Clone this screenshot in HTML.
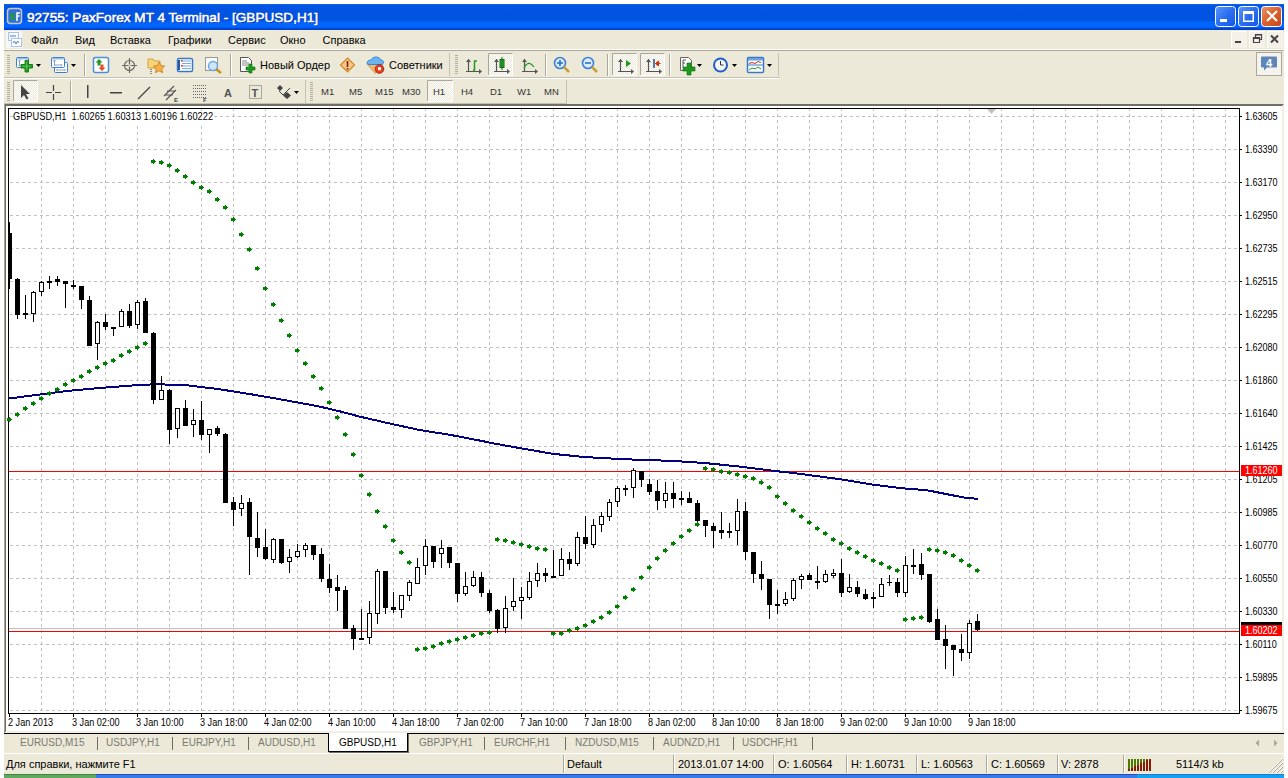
<!DOCTYPE html>
<html><head><meta charset="utf-8">
<style>
*{margin:0;padding:0;box-sizing:border-box}
html,body{width:1288px;height:778px;overflow:hidden;background:#fff;font-family:"Liberation Sans",sans-serif;position:relative}
.abs{position:absolute}
#title{position:absolute;left:4px;top:4px;width:1280px;height:26px;
 background:linear-gradient(to bottom,#1a64ea 0px,#0058e6 1px,#0054e1 4px,#0053df 16px,#0063f8 18px,#0066ff 19px,#0066ff 23px,#0050e0 24px,#0040c4 25px,#0045cc 26px);
 border-radius:0}
#title .tt{position:absolute;left:23px;top:5.5px;font:13.6px "Liberation Sans",sans-serif;color:#fff;white-space:nowrap;-webkit-text-stroke:0.55px #fff;text-shadow:1px 1px 0 #0a2a9c}
#menubar{position:absolute;left:4px;top:30px;width:1280px;height:19px;background:#ece9d8}
.mi{position:absolute;top:34px;font-size:11px;color:#000;white-space:nowrap}
#sep1{position:absolute;left:4px;top:49px;width:1280px;height:1px;background:#fff}
#sep2{position:absolute;left:4px;top:50px;width:1280px;height:1px;background:#aca899}
#tb{position:absolute;left:4px;top:51px;width:1280px;height:53px;background:#ece9d8}
#tbsh{position:absolute;left:4px;top:104px;width:1280px;height:2px;background:linear-gradient(#a5a291 0 1px,#716f64 1px 2px)}
#chartwin{position:absolute;left:4px;top:104px;width:1280px;height:629px;background:#fff;border-left:2px solid #716f64;border-top:2px solid #716f64;border-right:2px solid #f1efe2;border-bottom:2px solid #f1efe2;box-shadow:inset 0 0 0 0 #000}
#cwl{position:absolute;left:4px;top:104px;width:1px;height:627px;background:#a5a291}
.pl{position:absolute;left:1245px;font-size:10px;transform:scaleX(0.9);transform-origin:0 0;color:#000;white-space:nowrap;line-height:12px}
.tl{position:absolute;top:717px;font-size:10px;transform:scaleX(0.91);transform-origin:0 0;color:#000;white-space:nowrap;line-height:12px}
#clabel{position:absolute;left:13px;top:111px;background:#fff;padding-right:1px;font-size:10px;transform:scaleX(0.925);transform-origin:0 0;color:#000;white-space:nowrap;line-height:12px}
.sx{display:inline-block;transform:scaleX(0.9);transform-origin:0 0}
.plbox{position:absolute;left:1241px;width:41px;height:11px;background:#ff0000;color:#fff;font-size:10px;line-height:11px;padding-left:4px;white-space:nowrap}
#tabline{position:absolute;left:4px;top:733px;width:1280px;height:1px;background:#000}
#tabbar{position:absolute;left:4px;top:734px;width:1280px;height:19px;background:#ece9d8}
.tab{position:absolute;top:736px;font-size:10px;color:#7b7a72;white-space:nowrap;line-height:14px}
.tab.act{color:#000}
.acttab{position:absolute;left:328px;top:733px;width:80px;height:19px;background:#fff;border:1px solid #000;border-top:none;border-left-width:1px;border-bottom-width:1px;border-right-width:1px;box-shadow:1px 1px 0 #716f64}
.tsep{position:absolute;top:737px;width:1px;height:13px;background:#716f64}
#statusbar{position:absolute;left:4px;top:753px;width:1280px;height:21px;background:#ece9d8;border-top:1px solid #fff}
.st{position:absolute;top:758px;font-size:11px;color:#000;white-space:nowrap;line-height:13px}
.ssep{position:absolute;top:755px;width:2px;height:18px;border-left:1px solid #aca899;border-right:1px solid #fff}
#taskbar{position:absolute;left:4px;top:774px;width:1280px;height:4px;background:linear-gradient(#1c4fb8 0 1px,#3a7ae6 1px)}
#tray{position:absolute;left:1137px;top:774px;width:147px;height:4px;background:linear-gradient(#1680d8 0 1px,#16a0f0 1px)}
#startbtn{position:absolute;left:4px;top:774px;width:92px;height:4px;background:linear-gradient(#3a8a3a 0 1px,#62a862 1px)}
.tf{position:absolute;top:86px;font-size:9.5px;color:#333;white-space:nowrap;line-height:12px}
.grip{position:absolute;width:4px;background:repeating-linear-gradient(#c1beb3 0 1px,transparent 1px 2px)}
.vsep{position:absolute;width:1px;background:#aca899}
.pressed{position:absolute;border:1px solid #c1beb3;background-color:#f4f3ee;background-image:repeating-conic-gradient(#fff 0 25%,#ece9d8 0 50%);background-size:2px 2px}
.tbend{position:absolute;width:1px;background:#c1beb3}
</style></head><body>
<div id="title"><div class="tt">92755: PaxForex MT 4 Terminal - [GBPUSD,H1]</div></div>
<div id="menubar"></div>
<div class="mi" style="left:31px">Файл</div><div class="mi" style="left:75px">Вид</div><div class="mi" style="left:110px">Вставка</div><div class="mi" style="left:168px">Графики</div><div class="mi" style="left:228px">Сервис</div><div class="mi" style="left:280px">Окно</div><div class="mi" style="left:322.5px">Справка</div>
<div id="sep1"></div><div id="sep2"></div>
<div id="tb"></div>
<svg width="1288" height="105" viewBox="0 0 1288 105" style="position:absolute;left:0;top:0"><defs><pattern id="dith" width="2" height="2" patternUnits="userSpaceOnUse"><rect width="2" height="2" fill="#ece9d8"/><rect width="1" height="1" fill="#fff"/><rect x="1" y="1" width="1" height="1" fill="#fff"/></pattern></defs><rect x="4" y="77" width="776" height="1" fill="#c5c2b2"/><rect x="4" y="78" width="776" height="1" fill="#fff"/><rect x="4" y="103" width="563" height="1" fill="#c5c2b2"/><rect x="449" y="53" width="1" height="23" fill="#c5c2b2"/><rect x="778" y="53" width="1" height="23" fill="#c5c2b2"/><rect x="305" y="80" width="1" height="23" fill="#c5c2b2"/><rect x="566" y="80" width="1" height="23" fill="#c5c2b2"/><rect x="7.5" y="8.5" width="14" height="15" rx="3" fill="#2f6fe8" stroke="#c8c8c0" stroke-width="1.5"/><path d="M10 13l5 7M15 13l-5 7" stroke="#2a9a20" stroke-width="2"/><path d="M17 21V13h3M17 16h2.5" stroke="#fff" stroke-width="1.6" fill="none"/><defs><linearGradient id="tbg" x1="0" y1="0" x2="1" y2="1"><stop offset="0" stop-color="#5b97f8"/><stop offset="0.5" stop-color="#2d6ef0"/><stop offset="1" stop-color="#1456e6"/></linearGradient><linearGradient id="tbc" x1="0" y1="0" x2="1" y2="1"><stop offset="0" stop-color="#e8936a"/><stop offset="0.5" stop-color="#d9602d"/><stop offset="1" stop-color="#c8461a"/></linearGradient></defs><rect x="1215.5" y="6.5" width="20" height="20" rx="3" fill="url(#tbg)" stroke="#fff"/><rect x="1220" y="19" width="7" height="3" fill="#fff"/><rect x="1238.5" y="6.5" width="20" height="20" rx="3" fill="url(#tbg)" stroke="#fff"/><path d="M1243 11h11v11h-11zM1244.5 14v6.5h8v-6.5z" fill="#fff" fill-rule="evenodd"/><rect x="1261.5" y="6.5" width="20" height="20" rx="3" fill="url(#tbc)" stroke="#fff"/><path d="M1267 11l10 10M1277 11l-10 10" stroke="#fff" stroke-width="2"/><rect x="6" y="31" width="16" height="17" fill="#f6f7fb"/><rect x="8.5" y="32.5" width="10" height="8" fill="none" stroke="#5b8fd8" stroke-dasharray="1 1"/><rect x="11.5" y="38.5" width="10" height="8" fill="#fff" stroke="#5b8fd8" stroke-dasharray="1 1"/><path d="M13 43l1.5-2l1.5 3l1.5-3l1.5 2" stroke="#4a7fd0" fill="none"/><path d="M10 36h6" stroke="#4a7fd0"/><rect x="1231" y="31" width="16" height="17" fill="#f3f1e8"/><path d="M1231.5 48V31.5H1247" stroke="#fff" fill="none"/><rect x="1249" y="31" width="16" height="17" fill="#f3f1e8"/><path d="M1249.5 48V31.5H1265" stroke="#fff" fill="none"/><rect x="1267" y="31" width="16" height="17" fill="#f3f1e8"/><path d="M1267.5 48V31.5H1283" stroke="#fff" fill="none"/><rect x="1235" y="41" width="6" height="2" fill="#444"/><path d="M1253.5 37.5h6v5h-6zM1255.5 37v-2.5h6v5h-2" stroke="#444" stroke-width="1.2" fill="none"/><rect x="1253" y="37" width="7" height="2" fill="#444"/><rect x="1255" y="34" width="7" height="1.5" fill="#444"/><path d="M1271 35.5l7 7M1278 35.5l-7 7" stroke="#444" stroke-width="2"/><rect x="7" y="55" width="3" height="1" fill="#b1ae9e"/><rect x="7" y="57" width="3" height="1" fill="#b1ae9e"/><rect x="7" y="59" width="3" height="1" fill="#b1ae9e"/><rect x="7" y="61" width="3" height="1" fill="#b1ae9e"/><rect x="7" y="63" width="3" height="1" fill="#b1ae9e"/><rect x="7" y="65" width="3" height="1" fill="#b1ae9e"/><rect x="7" y="67" width="3" height="1" fill="#b1ae9e"/><rect x="7" y="69" width="3" height="1" fill="#b1ae9e"/><rect x="7" y="71" width="3" height="1" fill="#b1ae9e"/><rect x="7" y="73" width="3" height="1" fill="#b1ae9e"/><rect x="16.5" y="57.5" width="12" height="10" rx="1" fill="#fff" stroke="#3c7fd0"/><rect x="17" y="58" width="11" height="1.5" fill="#9cc0ea"/><path d="M19.5 60v6M18.2 61.3l1.3-1.3l1.3 1.3M18.2 64.7l1.3 1.3l1.3-1.3" stroke="#8aa4c4" fill="none"/><path d="M25 60.5h3.5v4h4v3.5h-4v4h-3.5v-4h-4v-3.5h4z" fill="#23a023" stroke="#0a7a0a" stroke-width="0.9"/><path d="M26.7 61.5v8M22.5 66.2h8" stroke="#8fd08f" stroke-width="0.8" opacity="0.7"/><path d="M36 64h5l-2.5 3z" fill="#000"/><rect x="54.5" y="62.5" width="13" height="10" rx="1" fill="#fff" stroke="#3c7fd0"/><path d="M57 70h8M57.5 69l-1 1l1 1M64.5 69l1 1l-1 1" stroke="#8aa4c4" fill="none"/><rect x="51.5" y="57.5" width="13" height="10" rx="1" fill="#fff" stroke="#3c7fd0"/><rect x="52" y="58" width="12" height="1.5" fill="#9cc0ea"/><path d="M54.5 60v6M53.2 61.3l1.3-1.3l1.3 1.3M54 65h8M61 64l1 1l-1 1" stroke="#8aa4c4" fill="none"/><path d="M71 64h5l-2.5 3z" fill="#000"/><rect x="84" y="54" width="1" height="22" fill="#aca899"/><rect x="85" y="54" width="1" height="22" fill="#fff"/><rect x="93.5" y="57.5" width="15" height="15" rx="2" fill="#fff" stroke="#4a90d9" stroke-width="1.5"/><path d="M99 59l-3.5 3.5h2v3h3v-3h2z" fill="#1e9a1e"/><path d="M102 71l3.5-3.5h-2v-3h-3v3h-2z" fill="#e05030"/><circle cx="129.5" cy="65.5" r="5" fill="none" stroke="#6a6a6a" stroke-width="1.2"/><path d="M129.5 58v15M122 65.5h15" stroke="#6a6a6a" stroke-width="1.2"/><rect x="128.5" y="64.5" width="2" height="2" fill="#ece9d8"/><path d="M148 59h5l1 2h6v7h-12z" fill="#f8d77a" stroke="#d4a040"/><path d="M159 62l1.8 3.6l3.9.5l-2.9 2.7l.8 3.9l-3.6-1.9l-3.5 1.9l.7-3.9l-2.8-2.7l3.9-.5z" fill="#f5b041" stroke="#c87a20" stroke-width="0.8"/><path d="M151 69v5" stroke="#333" stroke-dasharray="1 1"/><rect x="177.5" y="58.5" width="15" height="13" rx="1.5" fill="#fff" stroke="#3a78c8" stroke-width="1.5"/><path d="M179 60v10" stroke="#2a5aa0" stroke-width="2"/><path d="M182 61h9M182 63.5h9M182 66h9M182 68.5h9" stroke="#7aa8e0"/><rect x="181" y="60" width="1.5" height="1.5" fill="#e02020"/><rect x="181" y="65" width="1.5" height="1.5" fill="#e02020"/><rect x="205.5" y="57.5" width="12" height="13" fill="#fafafa" stroke="#999"/><circle cx="213" cy="66" r="4.5" fill="#cfe6fb" stroke="#6aa8e8" stroke-width="1.5"/><path d="M216 69l5 4" stroke="#c89020" stroke-width="2.5"/><rect x="230" y="54" width="1" height="22" fill="#aca899"/><rect x="231" y="54" width="1" height="22" fill="#fff"/><path d="M240.5 57.5h8l3 3v11h-11z" fill="#fff" stroke="#555"/><path d="M242 61h5M242 63h7M242 65h7" stroke="#888"/><path d="M249 64h3v3h3v3h-3v3h-3v-3h-3v-3h3z" fill="#1e9a1e" stroke="#0b6d0b" stroke-width="0.6"/><path d="M347.5 58l7 7l-7 7l-7-7z" fill="#f8c88a" stroke="#d08a20" stroke-width="1.2"/><path d="M347.5 61v6" stroke="#8a1a10" stroke-width="1.6"/><rect x="346.7" y="68" width="1.6" height="1.6" fill="#8a1a10"/><path d="M367.5 64.5l8 9l5-4l2-5.5z" fill="#f5b870" stroke="#c88a40" stroke-width="0.8"/><path d="M367 63c0-2 2-3 4-3c1-2 3-3 5-3s4 1 5 3c1.5 0 2.5 1 2.5 2.5c0 1.5-1.5 2-3 2h-10.5c-2 0-3-.5-3-1.5z" fill="#6cb4f0" stroke="#2a7ad8" stroke-width="0.9"/><circle cx="379.5" cy="69" r="4.3" fill="#e8401a" stroke="#a02010" stroke-width="0.9"/><rect x="378" y="67.2" width="3" height="3" fill="#fff"/><rect x="455" y="55" width="3" height="1" fill="#b1ae9e"/><rect x="455" y="57" width="3" height="1" fill="#b1ae9e"/><rect x="455" y="59" width="3" height="1" fill="#b1ae9e"/><rect x="455" y="61" width="3" height="1" fill="#b1ae9e"/><rect x="455" y="63" width="3" height="1" fill="#b1ae9e"/><rect x="455" y="65" width="3" height="1" fill="#b1ae9e"/><rect x="455" y="67" width="3" height="1" fill="#b1ae9e"/><rect x="455" y="69" width="3" height="1" fill="#b1ae9e"/><rect x="455" y="71" width="3" height="1" fill="#b1ae9e"/><rect x="455" y="73" width="3" height="1" fill="#b1ae9e"/><path d="M468.5 59V72M466 71.5H480" stroke="#555" stroke-width="1.2" fill="none"/><path d="M466 62l2.5-3l2.5 3z M479 69l3 2.5l-3 2.5z" fill="#555"/><path d="M473 70h1.5V61H477" stroke="#1e9a1e" stroke-width="1.5" fill="none"/><rect x="488" y="53" width="25" height="23" fill="url(#dith)"/><path d="M488.5 76V53.5H513" stroke="#aca899" fill="none"/><path d="M512.5 53.5V75.5H488" stroke="#fff" fill="none"/><path d="M496.5 59V72M494 71.5H508" stroke="#555" stroke-width="1.2" fill="none"/><path d="M494 62l2.5-3l2.5 3z M507 69l3 2.5l-3 2.5z" fill="#555"/><rect x="500" y="59.5" width="4" height="8" fill="#3cae3c" stroke="#0b6d0b"/><path d="M502 57v13" stroke="#0b6d0b"/><path d="M524.5 59V72M522 71.5H536" stroke="#555" stroke-width="1.2" fill="none"/><path d="M522 62l2.5-3l2.5 3z M535 69l3 2.5l-3 2.5z" fill="#555"/><path d="M524 68c3-6 6-6 10-1" stroke="#1e9a1e" stroke-width="1.2" fill="none"/><rect x="545" y="54" width="1" height="22" fill="#aca899"/><rect x="546" y="54" width="1" height="22" fill="#fff"/><circle cx="560" cy="63" r="5.5" fill="#dbeafc" stroke="#3a80d8" stroke-width="1.6"/><path d="M557 63h6M560 60v6" stroke="#2a70c8" stroke-width="1.6"/><path d="M564 67l5 5" stroke="#c8a030" stroke-width="2.5"/><circle cx="588" cy="63" r="5.5" fill="#dbeafc" stroke="#3a80d8" stroke-width="1.6"/><path d="M585 63h6" stroke="#2a70c8" stroke-width="1.6"/><path d="M592 67l5 5" stroke="#c8a030" stroke-width="2.5"/><rect x="607" y="54" width="1" height="22" fill="#aca899"/><rect x="608" y="54" width="1" height="22" fill="#fff"/><rect x="612" y="53" width="25" height="23" fill="url(#dith)"/><path d="M612.5 76V53.5H637" stroke="#aca899" fill="none"/><path d="M636.5 53.5V75.5H612" stroke="#fff" fill="none"/><path d="M620.5 59V72M618 71.5H632" stroke="#555" stroke-width="1.2" fill="none"/><path d="M618 62l2.5-3l2.5 3z M631 69l3 2.5l-3 2.5z" fill="#555"/><path d="M626 60v7l5-3.5z" fill="#1e9a1e"/><rect x="640" y="53" width="25" height="23" fill="url(#dith)"/><path d="M640.5 76V53.5H665" stroke="#aca899" fill="none"/><path d="M664.5 53.5V75.5H640" stroke="#fff" fill="none"/><path d="M648.5 59V72M646 71.5H660" stroke="#555" stroke-width="1.2" fill="none"/><path d="M646 62l2.5-3l2.5 3z M659 69l3 2.5l-3 2.5z" fill="#555"/><path d="M654 59v9" stroke="#2050a0" stroke-width="1.5"/><path d="M655.5 63.5h5M655.5 63.5l3-2.5v5z" stroke="#d03010" fill="#d03010"/><rect x="669" y="54" width="1" height="22" fill="#aca899"/><rect x="670" y="54" width="1" height="22" fill="#fff"/><path d="M680.5 57.5h8l3 3v10h-11z" fill="#fff" stroke="#666"/><path d="M683 60v7M683 60h3M683 63h2" stroke="#555"/><path d="M687 63h4v4h4v4h-4v4h-4v-4h-4v-4h4z" fill="#1e9a1e" stroke="#0b6d0b" stroke-width="0.6"/><path d="M697 64h5l-2.5 3z" fill="#000"/><circle cx="720.5" cy="65" r="7.5" fill="#2060c8"/><circle cx="720.5" cy="65" r="5.5" fill="#f4f6fa"/><path d="M720.5 61v4h3" stroke="#333" fill="none"/><path d="M732 64h5l-2.5 3z" fill="#000"/><rect x="747.5" y="57.5" width="16" height="15" rx="1" fill="#fff" stroke="#3a78c8" stroke-width="1.5"/><rect x="748" y="58" width="15" height="2.5" fill="#6aa0e0"/><path d="M748 65h15" stroke="#3a78c8"/><path d="M749 63.5l3-1l3 1l3-2l3 1" stroke="#c03020" fill="none"/><path d="M749 70l3-2l3 1l3-2l3 2" stroke="#1e9a1e" fill="none"/><path d="M767 64h5l-2.5 3z" fill="#000"/><rect x="1256.5" y="52.5" width="25" height="23" fill="#f4f3ee" stroke="#aca899"/><path d="M1262 56.5h14a1 1 0 0 1 1 1v9a1 1 0 0 1-1 1h-9l-3 3v-3h-2a1 1 0 0 1-1-1v-9a1 1 0 0 1 1-1z" fill="#5f86b8"/><text x="1269" y="66.5" font-family="Liberation Sans" font-size="11" font-weight="bold" fill="#fff" text-anchor="middle">4</text><rect x="7" y="82" width="3" height="1" fill="#b1ae9e"/><rect x="7" y="84" width="3" height="1" fill="#b1ae9e"/><rect x="7" y="86" width="3" height="1" fill="#b1ae9e"/><rect x="7" y="88" width="3" height="1" fill="#b1ae9e"/><rect x="7" y="90" width="3" height="1" fill="#b1ae9e"/><rect x="7" y="92" width="3" height="1" fill="#b1ae9e"/><rect x="7" y="94" width="3" height="1" fill="#b1ae9e"/><rect x="7" y="96" width="3" height="1" fill="#b1ae9e"/><rect x="7" y="98" width="3" height="1" fill="#b1ae9e"/><rect x="7" y="100" width="3" height="1" fill="#b1ae9e"/><rect x="13" y="80" width="25" height="22" fill="url(#dith)"/><path d="M13.5 102V80.5H38" stroke="#aca899" fill="none"/><path d="M37.5 80.5V101.5H13" stroke="#fff" fill="none"/><path d="M21 85v13l3-3l2.5 4.5l2-1l-2.5-4.5h4z" fill="#444"/><path d="M53.5 85v15M46 92.5h15" stroke="#444" stroke-width="1.2"/><rect x="52" y="91" width="3" height="3" fill="#ece9d8"/><rect x="70" y="81" width="1" height="21" fill="#aca899"/><rect x="71" y="81" width="1" height="21" fill="#fff"/><rect x="87" y="85" width="1.5" height="13" fill="#444"/><rect x="110" y="92" width="12" height="1.5" fill="#444"/><path d="M138 99L150 87" stroke="#444" stroke-width="1.2"/><path d="M164 96l10-10M166 100l10-10M167 91h8M165 95h8" stroke="#555" stroke-width="1.2"/><text x="174" y="102" font-family="Liberation Sans" font-size="6" font-weight="bold" fill="#444">E</text><path d="M193 85.5h14M193 88.5h14M193 91.5h14M193 94.5h14M193 97.5h14" stroke="#666" stroke-dasharray="1 1"/><text x="203" y="102" font-family="Liberation Sans" font-size="6" font-weight="bold" fill="#444">F</text><text x="224" y="97" font-family="Liberation Sans" font-size="11" font-weight="bold" fill="#555">A</text><rect x="249.5" y="85.5" width="12" height="13" fill="none" stroke="#666" stroke-dasharray="1 1"/><text x="251.5" y="97" font-family="Liberation Sans" font-size="11" font-weight="bold" fill="#555">T</text><path d="M280 85l3 3l-3 3l-3-3z M287 92l4 3.5l-4 3.5l-4-3.5z" fill="#444"/><path d="M279 91l4 4l7-7" stroke="#444" fill="none"/><path d="M294 91h5l-2.5 3z" fill="#000"/><rect x="310" y="82" width="3" height="1" fill="#b1ae9e"/><rect x="310" y="84" width="3" height="1" fill="#b1ae9e"/><rect x="310" y="86" width="3" height="1" fill="#b1ae9e"/><rect x="310" y="88" width="3" height="1" fill="#b1ae9e"/><rect x="310" y="90" width="3" height="1" fill="#b1ae9e"/><rect x="310" y="92" width="3" height="1" fill="#b1ae9e"/><rect x="310" y="94" width="3" height="1" fill="#b1ae9e"/><rect x="310" y="96" width="3" height="1" fill="#b1ae9e"/><rect x="310" y="98" width="3" height="1" fill="#b1ae9e"/><rect x="310" y="100" width="3" height="1" fill="#b1ae9e"/><rect x="427" y="80" width="26" height="22" fill="url(#dith)"/><path d="M427.5 102V80.5H453" stroke="#aca899" fill="none"/><path d="M452.5 80.5V101.5H427" stroke="#fff" fill="none"/></svg>
<div class="tf" style="left:321px">M1</div><div class="tf" style="left:349px">M5</div><div class="tf" style="left:375px">M15</div><div class="tf" style="left:402px">M30</div><div class="tf" style="left:433px">H1</div><div class="tf" style="left:461px">H4</div><div class="tf" style="left:490px">D1</div><div class="tf" style="left:517px">W1</div><div class="tf" style="left:544px">MN</div>
<div class="mi" style="left:260px;top:59px">Новый Ордер</div>
<div class="mi" style="left:389px;top:59px">Советники</div>
<div id="tbsh"></div>
<div id="chartwin"></div><div id="cwl"></div>
<svg width="1288" height="778" viewBox="0 0 1288 778" style="position:absolute;left:0;top:0" shape-rendering="crispEdges">
<path d="M41.5 108V713M73.5 108V713M105.5 108V713M137.5 108V713M169.5 108V713M201.5 108V713M233.5 108V713M265.5 108V713M297.5 108V713M329.5 108V713M361.5 108V713M393.5 108V713M425.5 108V713M457.5 108V713M489.5 108V713M521.5 108V713M553.5 108V713M585.5 108V713M617.5 108V713M649.5 108V713M681.5 108V713M713.5 108V713M745.5 108V713M777.5 108V713M809.5 108V713M841.5 108V713M873.5 108V713M905.5 108V713M937.5 108V713M969.5 108V713M1001.5 108V713M1033.5 108V713M1065.5 108V713M1097.5 108V713M1129.5 108V713M1161.5 108V713M1193.5 108V713M1225.5 108V713" stroke="#c0c0c0" stroke-width="1" stroke-dasharray="3 3" fill="none"/>
<path d="M10 116.5H1239M10 149.5H1239M10 182.5H1239M10 215.5H1239M10 248.5H1239M10 281.5H1239M10 314.5H1239M10 347.5H1239M10 380.5H1239M10 413.5H1239M10 446.5H1239M10 479.5H1239M10 512.5H1239M10 545.5H1239M10 578.5H1239M10 611.5H1239M10 644.5H1239M10 677.5H1239M10 710.5H1239" stroke="#c0c0c0" stroke-width="1" stroke-dasharray="3 3" fill="none"/>
<rect x="8.5" y="108.5" width="1231" height="605" fill="none" stroke="#000" stroke-width="1"/>
<path d="M1240 116.5H1242M1240 149.5H1242M1240 182.5H1242M1240 215.5H1242M1240 248.5H1242M1240 281.5H1242M1240 314.5H1242M1240 347.5H1242M1240 380.5H1242M1240 413.5H1242M1240 446.5H1242M1240 479.5H1242M1240 512.5H1242M1240 545.5H1242M1240 578.5H1242M1240 611.5H1242M1240 644.5H1242M1240 677.5H1242M1240 710.5H1242M9.5 714V717M73.5 714V717M137.5 714V717M201.5 714V717M265.5 714V717M329.5 714V717M393.5 714V717M457.5 714V717M521.5 714V717M585.5 714V717M649.5 714V717M713.5 714V717M777.5 714V717M841.5 714V717M905.5 714V717M969.5 714V717" stroke="#000" stroke-width="1" fill="none"/>
<path d="M987 109H996L991.5 114Z" fill="#c0c0c0" shape-rendering="auto"/>
<path d="M9 471.5H1239" stroke="#ff0000" stroke-width="1"/>
<path d="M9 628.5H1239" stroke="#c0c0c0" stroke-width="1"/>
<path d="M9 631.5H1239" stroke="#ff0000" stroke-width="1"/>
<polyline points="9.0,398.5 35.8,395.0 66.7,391.0 97.5,388.2 137.6,385.1 157.0,384.2 187.8,385.4 218.7,389.1 249.5,394.0 280.3,399.3 317.0,406.0 340.0,411.4 360.0,416.7 389.7,423.5 419.5,430.0 449.3,434.7 481.6,440.9 491.8,443.1 522.7,448.6 553.5,453.9 584.3,457.0 621.0,459.1 674.7,461.0 705.5,463.1 736.3,466.2 773.0,470.8 795.8,473.3 842.1,479.5 872.9,484.7 903.7,488.4 925.0,490.0 933.0,491.4 949.0,494.6 965.2,497.8 978.0,498.8" fill="none" stroke="#000080" stroke-width="2"/>
<defs><clipPath id="cc"><rect x="9" y="109" width="1230" height="604"/></clipPath></defs><g clip-path="url(#cc)">
<path d="M9.5 222V289M17.5 278V319M25.5 295V319M33.5 291V322M41.5 281V296M49.5 276V289M57.5 276V286M65.5 281V308M73.5 280V289M81.5 286V309M89.5 296V346M97.5 321V360M105.5 314V330M113.5 327V336M121.5 309V327M129.5 304V328M137.5 300V329M145.5 298V333M153.5 332V404M161.5 376V400M169.5 389V444M177.5 408V438M185.5 400V426M193.5 409V437M201.5 401V440M209.5 429V453M217.5 426V436M225.5 433V503M233.5 497V526M241.5 495V516M249.5 498V575M257.5 512V557M265.5 529V560M273.5 538V563M281.5 539V564M289.5 549V573M297.5 544V558M305.5 543V557M313.5 545V560M321.5 548V582M329.5 564V593M337.5 575V611M345.5 586V629M353.5 625V650M361.5 609V639M369.5 601V644M377.5 569V624M385.5 571V614M393.5 592V613M401.5 595V618M409.5 580V601M417.5 558V584M425.5 539V575M433.5 546V568M441.5 540V568M449.5 547V568M457.5 563V602M465.5 572V596M473.5 571V587M481.5 572V597M489.5 590V613M497.5 609V633M505.5 596V633M513.5 578V611M521.5 587V619M529.5 572V600M537.5 563V587M545.5 568V582M553.5 550V576M561.5 548V576M569.5 552V570M577.5 532V566M585.5 516V549M593.5 519V548M601.5 512V532M609.5 499V521M617.5 486V507M625.5 485V496M633.5 468V498M641.5 471V487M649.5 479V495M657.5 480V510M665.5 482V508M673.5 482V508M681.5 491V505M689.5 492V503M697.5 500V523M705.5 520V537M713.5 523V548M721.5 512V539M729.5 523V538M737.5 499V545M745.5 502V560M753.5 552V583M761.5 561V590M769.5 579V619M777.5 590V614M785.5 592V606M793.5 578V601M801.5 574V589M809.5 573V580M817.5 566V589M825.5 570V583M833.5 569V578M841.5 559V597M849.5 574V593M857.5 581V597M865.5 589V600M873.5 592V608M881.5 578V597M889.5 575V586M897.5 578V597M905.5 556V597M913.5 549V574M921.5 553V580M929.5 574V623M937.5 609V640M945.5 625V669M953.5 645V676M961.5 634V661M969.5 620V659M977.5 614V631" stroke="#000" stroke-width="1" fill="none"/>
<rect x="7" y="233" width="5" height="46" fill="#000"/>
<rect x="15" y="279" width="5" height="36" fill="#000"/>
<rect x="23" y="313" width="5" height="2" fill="#000"/>
<rect x="31.5" y="292.5" width="4" height="21" fill="#fff" stroke="#000" stroke-width="1"/>
<rect x="39.5" y="282.5" width="4" height="9" fill="#fff" stroke="#000" stroke-width="1"/>
<rect x="47" y="281" width="5" height="2" fill="#000"/>
<rect x="55" y="279" width="5" height="3" fill="#000"/>
<rect x="63" y="281" width="5" height="3" fill="#000"/>
<rect x="71" y="285" width="5" height="2" fill="#000"/>
<rect x="79" y="286" width="5" height="14" fill="#000"/>
<rect x="87" y="300" width="5" height="46" fill="#000"/>
<rect x="95.5" y="322.5" width="4" height="21" fill="#fff" stroke="#000" stroke-width="1"/>
<rect x="103" y="322" width="5" height="5" fill="#000"/>
<rect x="111" y="327" width="5" height="2" fill="#000"/>
<rect x="119.5" y="311.5" width="4" height="15" fill="#fff" stroke="#000" stroke-width="1"/>
<rect x="127" y="311" width="5" height="15" fill="#000"/>
<rect x="135.5" y="302.5" width="4" height="22" fill="#fff" stroke="#000" stroke-width="1"/>
<rect x="143" y="301" width="5" height="32" fill="#000"/>
<rect x="151" y="333" width="5" height="67" fill="#000"/>
<rect x="159.5" y="390.5" width="4" height="9" fill="#fff" stroke="#000" stroke-width="1"/>
<rect x="167" y="390" width="5" height="40" fill="#000"/>
<rect x="175.5" y="408.5" width="4" height="20" fill="#fff" stroke="#000" stroke-width="1"/>
<rect x="183" y="408" width="5" height="18" fill="#000"/>
<rect x="191.5" y="420.5" width="4" height="4" fill="#fff" stroke="#000" stroke-width="1"/>
<rect x="199" y="420" width="5" height="15" fill="#000"/>
<rect x="207.5" y="429.5" width="4" height="5" fill="#fff" stroke="#000" stroke-width="1"/>
<rect x="215" y="428" width="5" height="6" fill="#000"/>
<rect x="223" y="434" width="5" height="69" fill="#000"/>
<rect x="231" y="502" width="5" height="8" fill="#000"/>
<rect x="239.5" y="503.5" width="4" height="5" fill="#fff" stroke="#000" stroke-width="1"/>
<rect x="247" y="502" width="5" height="35" fill="#000"/>
<rect x="255" y="538" width="5" height="10" fill="#000"/>
<rect x="263" y="547" width="5" height="12" fill="#000"/>
<rect x="271.5" y="539.5" width="4" height="20" fill="#fff" stroke="#000" stroke-width="1"/>
<rect x="279" y="539" width="5" height="24" fill="#000"/>
<rect x="287.5" y="557.5" width="4" height="4" fill="#fff" stroke="#000" stroke-width="1"/>
<rect x="295.5" y="551.5" width="4" height="5" fill="#fff" stroke="#000" stroke-width="1"/>
<rect x="303.5" y="545.5" width="4" height="4" fill="#fff" stroke="#000" stroke-width="1"/>
<rect x="311" y="545" width="5" height="10" fill="#000"/>
<rect x="319" y="554" width="5" height="25" fill="#000"/>
<rect x="327" y="579" width="5" height="9" fill="#000"/>
<rect x="335" y="587" width="5" height="4" fill="#000"/>
<rect x="343" y="590" width="5" height="39" fill="#000"/>
<rect x="351" y="628" width="5" height="11" fill="#000"/>
<rect x="359" y="638" width="5" height="2" fill="#000"/>
<rect x="367.5" y="613.5" width="4" height="24" fill="#fff" stroke="#000" stroke-width="1"/>
<rect x="375.5" y="571.5" width="4" height="42" fill="#fff" stroke="#000" stroke-width="1"/>
<rect x="383" y="571" width="5" height="37" fill="#000"/>
<rect x="391" y="607" width="5" height="3" fill="#000"/>
<rect x="399.5" y="595.5" width="4" height="14" fill="#fff" stroke="#000" stroke-width="1"/>
<rect x="407.5" y="582.5" width="4" height="13" fill="#fff" stroke="#000" stroke-width="1"/>
<rect x="415.5" y="567.5" width="4" height="16" fill="#fff" stroke="#000" stroke-width="1"/>
<rect x="423.5" y="546.5" width="4" height="19" fill="#fff" stroke="#000" stroke-width="1"/>
<rect x="431" y="546" width="5" height="16" fill="#000"/>
<rect x="439.5" y="548.5" width="4" height="5" fill="#fff" stroke="#000" stroke-width="1"/>
<rect x="447" y="547" width="5" height="16" fill="#000"/>
<rect x="455" y="563" width="5" height="31" fill="#000"/>
<rect x="463.5" y="586.5" width="4" height="7" fill="#fff" stroke="#000" stroke-width="1"/>
<rect x="471.5" y="577.5" width="4" height="8" fill="#fff" stroke="#000" stroke-width="1"/>
<rect x="479" y="577" width="5" height="16" fill="#000"/>
<rect x="487" y="593" width="5" height="18" fill="#000"/>
<rect x="495" y="610" width="5" height="19" fill="#000"/>
<rect x="503.5" y="608.5" width="4" height="19" fill="#fff" stroke="#000" stroke-width="1"/>
<rect x="511.5" y="601.5" width="4" height="5" fill="#fff" stroke="#000" stroke-width="1"/>
<rect x="519.5" y="597.5" width="4" height="3" fill="#fff" stroke="#000" stroke-width="1"/>
<rect x="527.5" y="581.5" width="4" height="16" fill="#fff" stroke="#000" stroke-width="1"/>
<rect x="535.5" y="573.5" width="4" height="7" fill="#fff" stroke="#000" stroke-width="1"/>
<rect x="543" y="573" width="5" height="3" fill="#000"/>
<rect x="551" y="576" width="5" height="2" fill="#000"/>
<rect x="559.5" y="559.5" width="4" height="16" fill="#fff" stroke="#000" stroke-width="1"/>
<rect x="567" y="559" width="5" height="5" fill="#000"/>
<rect x="575.5" y="537.5" width="4" height="26" fill="#fff" stroke="#000" stroke-width="1"/>
<rect x="583" y="537" width="5" height="7" fill="#000"/>
<rect x="591.5" y="525.5" width="4" height="19" fill="#fff" stroke="#000" stroke-width="1"/>
<rect x="599.5" y="516.5" width="4" height="8" fill="#fff" stroke="#000" stroke-width="1"/>
<rect x="607.5" y="502.5" width="4" height="14" fill="#fff" stroke="#000" stroke-width="1"/>
<rect x="615.5" y="488.5" width="4" height="13" fill="#fff" stroke="#000" stroke-width="1"/>
<rect x="623" y="488" width="5" height="2" fill="#000"/>
<rect x="631.5" y="470.5" width="4" height="17" fill="#fff" stroke="#000" stroke-width="1"/>
<rect x="639" y="471" width="5" height="9" fill="#000"/>
<rect x="647" y="484" width="5" height="8" fill="#000"/>
<rect x="655" y="491" width="5" height="10" fill="#000"/>
<rect x="663.5" y="493.5" width="4" height="7" fill="#fff" stroke="#000" stroke-width="1"/>
<rect x="671" y="493" width="5" height="6" fill="#000"/>
<rect x="679" y="498" width="5" height="2" fill="#000"/>
<rect x="687" y="498" width="5" height="5" fill="#000"/>
<rect x="695" y="503" width="5" height="18" fill="#000"/>
<rect x="703" y="520" width="5" height="6" fill="#000"/>
<rect x="711" y="526" width="5" height="5" fill="#000"/>
<rect x="719" y="530" width="5" height="3" fill="#000"/>
<rect x="727.5" y="531.5" width="4" height="1" fill="#fff" stroke="#000" stroke-width="1"/>
<rect x="735.5" y="511.5" width="4" height="19" fill="#fff" stroke="#000" stroke-width="1"/>
<rect x="743" y="511" width="5" height="41" fill="#000"/>
<rect x="751" y="552" width="5" height="22" fill="#000"/>
<rect x="759" y="574" width="5" height="5" fill="#000"/>
<rect x="767" y="579" width="5" height="26" fill="#000"/>
<rect x="775.5" y="604.5" width="4" height="1" fill="#fff" stroke="#000" stroke-width="1"/>
<rect x="783.5" y="599.5" width="4" height="4" fill="#fff" stroke="#000" stroke-width="1"/>
<rect x="791.5" y="580.5" width="4" height="18" fill="#fff" stroke="#000" stroke-width="1"/>
<rect x="799.5" y="576.5" width="4" height="3" fill="#fff" stroke="#000" stroke-width="1"/>
<rect x="807" y="575" width="5" height="5" fill="#000"/>
<rect x="815" y="581" width="5" height="2" fill="#000"/>
<rect x="823.5" y="574.5" width="4" height="7" fill="#fff" stroke="#000" stroke-width="1"/>
<rect x="831.5" y="573.5" width="4" height="2" fill="#fff" stroke="#000" stroke-width="1"/>
<rect x="839" y="573" width="5" height="20" fill="#000"/>
<rect x="847.5" y="587.5" width="4" height="4" fill="#fff" stroke="#000" stroke-width="1"/>
<rect x="855" y="587" width="5" height="7" fill="#000"/>
<rect x="863" y="594" width="5" height="5" fill="#000"/>
<rect x="871" y="597" width="5" height="2" fill="#000"/>
<rect x="879.5" y="584.5" width="4" height="12" fill="#fff" stroke="#000" stroke-width="1"/>
<rect x="887" y="582" width="5" height="1" fill="#000"/>
<rect x="895" y="582" width="5" height="11" fill="#000"/>
<rect x="903.5" y="565.5" width="4" height="27" fill="#fff" stroke="#000" stroke-width="1"/>
<rect x="911" y="565" width="5" height="2" fill="#000"/>
<rect x="919" y="564" width="5" height="11" fill="#000"/>
<rect x="927" y="574" width="5" height="48" fill="#000"/>
<rect x="935" y="619" width="5" height="21" fill="#000"/>
<rect x="943" y="639" width="5" height="7" fill="#000"/>
<rect x="951" y="645" width="5" height="5" fill="#000"/>
<rect x="959" y="649" width="5" height="4" fill="#000"/>
<rect x="967.5" y="623.5" width="4" height="29" fill="#fff" stroke="#000" stroke-width="1"/>
<rect x="975" y="621" width="5" height="9" fill="#000"/>
</g>
<path d="M9 417h1v1h1v1h1v1h-1v1h-1v1h-1v-1h-2v-3h2zM17 412h1v1h1v1h1v1h-1v1h-1v1h-1v-1h-2v-3h2zM25 406h1v1h1v1h1v1h-1v1h-1v1h-1v-1h-2v-3h2zM33 401h1v1h1v1h1v1h-1v1h-1v1h-1v-1h-2v-3h2zM41 396h1v1h1v1h1v1h-1v1h-1v1h-1v-1h-2v-3h2zM49 391h1v1h1v1h1v1h-1v1h-1v1h-1v-1h-2v-3h2zM57 387h1v1h1v1h1v1h-1v1h-1v1h-1v-1h-2v-3h2zM65 382h1v1h1v1h1v1h-1v1h-1v1h-1v-1h-2v-3h2zM73 378h1v1h1v1h1v1h-1v1h-1v1h-1v-1h-2v-3h2zM81 374h1v1h1v1h1v1h-1v1h-1v1h-1v-1h-2v-3h2zM89 369h1v1h1v1h1v1h-1v1h-1v1h-1v-1h-2v-3h2zM97 365h1v1h1v1h1v1h-1v1h-1v1h-1v-1h-2v-3h2zM105 361h1v1h1v1h1v1h-1v1h-1v1h-1v-1h-2v-3h2zM113 358h1v1h1v1h1v1h-1v1h-1v1h-1v-1h-2v-3h2zM121 353h1v1h1v1h1v1h-1v1h-1v1h-1v-1h-2v-3h2zM129 349h1v1h1v1h1v1h-1v1h-1v1h-1v-1h-2v-3h2zM137 345h1v1h1v1h1v1h-1v1h-1v1h-1v-1h-2v-3h2zM145 341h1v1h1v1h1v1h-1v1h-1v1h-1v-1h-2v-3h2zM153 159h1v1h1v1h1v1h-1v1h-1v1h-1v-1h-2v-3h2zM161 160h1v1h1v1h1v1h-1v1h-1v1h-1v-1h-2v-3h2zM169 163h1v1h1v1h1v1h-1v1h-1v1h-1v-1h-2v-3h2zM177 168h1v1h1v1h1v1h-1v1h-1v1h-1v-1h-2v-3h2zM185 174h1v1h1v1h1v1h-1v1h-1v1h-1v-1h-2v-3h2zM193 180h1v1h1v1h1v1h-1v1h-1v1h-1v-1h-2v-3h2zM201 185h1v1h1v1h1v1h-1v1h-1v1h-1v-1h-2v-3h2zM209 189h1v1h1v1h1v1h-1v1h-1v1h-1v-1h-2v-3h2zM217 197h1v1h1v1h1v1h-1v1h-1v1h-1v-1h-2v-3h2zM225 205h1v1h1v1h1v1h-1v1h-1v1h-1v-1h-2v-3h2zM233 217h1v1h1v1h1v1h-1v1h-1v1h-1v-1h-2v-3h2zM241 232h1v1h1v1h1v1h-1v1h-1v1h-1v-1h-2v-3h2zM249 247h1v1h1v1h1v1h-1v1h-1v1h-1v-1h-2v-3h2zM257 266h1v1h1v1h1v1h-1v1h-1v1h-1v-1h-2v-3h2zM265 286h1v1h1v1h1v1h-1v1h-1v1h-1v-1h-2v-3h2zM273 302h1v1h1v1h1v1h-1v1h-1v1h-1v-1h-2v-3h2zM281 318h1v1h1v1h1v1h-1v1h-1v1h-1v-1h-2v-3h2zM289 333h1v1h1v1h1v1h-1v1h-1v1h-1v-1h-2v-3h2zM297 348h1v1h1v1h1v1h-1v1h-1v1h-1v-1h-2v-3h2zM305 361h1v1h1v1h1v1h-1v1h-1v1h-1v-1h-2v-3h2zM313 374h1v1h1v1h1v1h-1v1h-1v1h-1v-1h-2v-3h2zM321 386h1v1h1v1h1v1h-1v1h-1v1h-1v-1h-2v-3h2zM329 400h1v1h1v1h1v1h-1v1h-1v1h-1v-1h-2v-3h2zM337 415h1v1h1v1h1v1h-1v1h-1v1h-1v-1h-2v-3h2zM345 432h1v1h1v1h1v1h-1v1h-1v1h-1v-1h-2v-3h2zM353 452h1v1h1v1h1v1h-1v1h-1v1h-1v-1h-2v-3h2zM361 473h1v1h1v1h1v1h-1v1h-1v1h-1v-1h-2v-3h2zM369 492h1v1h1v1h1v1h-1v1h-1v1h-1v-1h-2v-3h2zM377 509h1v1h1v1h1v1h-1v1h-1v1h-1v-1h-2v-3h2zM385 524h1v1h1v1h1v1h-1v1h-1v1h-1v-1h-2v-3h2zM393 538h1v1h1v1h1v1h-1v1h-1v1h-1v-1h-2v-3h2zM401 550h1v1h1v1h1v1h-1v1h-1v1h-1v-1h-2v-3h2zM409 560h1v1h1v1h1v1h-1v1h-1v1h-1v-1h-2v-3h2zM417 647h1v1h1v1h1v1h-1v1h-1v1h-1v-1h-2v-3h2zM425 646h1v1h1v1h1v1h-1v1h-1v1h-1v-1h-2v-3h2zM433 644h1v1h1v1h1v1h-1v1h-1v1h-1v-1h-2v-3h2zM441 641h1v1h1v1h1v1h-1v1h-1v1h-1v-1h-2v-3h2zM449 639h1v1h1v1h1v1h-1v1h-1v1h-1v-1h-2v-3h2zM457 637h1v1h1v1h1v1h-1v1h-1v1h-1v-1h-2v-3h2zM465 635h1v1h1v1h1v1h-1v1h-1v1h-1v-1h-2v-3h2zM473 633h1v1h1v1h1v1h-1v1h-1v1h-1v-1h-2v-3h2zM481 631h1v1h1v1h1v1h-1v1h-1v1h-1v-1h-2v-3h2zM489 630h1v1h1v1h1v1h-1v1h-1v1h-1v-1h-2v-3h2zM497 537h1v1h1v1h1v1h-1v1h-1v1h-1v-1h-2v-3h2zM505 538h1v1h1v1h1v1h-1v1h-1v1h-1v-1h-2v-3h2zM513 540h1v1h1v1h1v1h-1v1h-1v1h-1v-1h-2v-3h2zM521 542h1v1h1v1h1v1h-1v1h-1v1h-1v-1h-2v-3h2zM529 544h1v1h1v1h1v1h-1v1h-1v1h-1v-1h-2v-3h2zM537 546h1v1h1v1h1v1h-1v1h-1v1h-1v-1h-2v-3h2zM545 547h1v1h1v1h1v1h-1v1h-1v1h-1v-1h-2v-3h2zM553 631h1v1h1v1h1v1h-1v1h-1v1h-1v-1h-2v-3h2zM561 631h1v1h1v1h1v1h-1v1h-1v1h-1v-1h-2v-3h2zM569 628h1v1h1v1h1v1h-1v1h-1v1h-1v-1h-2v-3h2zM577 626h1v1h1v1h1v1h-1v1h-1v1h-1v-1h-2v-3h2zM585 623h1v1h1v1h1v1h-1v1h-1v1h-1v-1h-2v-3h2zM593 619h1v1h1v1h1v1h-1v1h-1v1h-1v-1h-2v-3h2zM601 615h1v1h1v1h1v1h-1v1h-1v1h-1v-1h-2v-3h2zM609 610h1v1h1v1h1v1h-1v1h-1v1h-1v-1h-2v-3h2zM617 604h1v1h1v1h1v1h-1v1h-1v1h-1v-1h-2v-3h2zM625 595h1v1h1v1h1v1h-1v1h-1v1h-1v-1h-2v-3h2zM633 587h1v1h1v1h1v1h-1v1h-1v1h-1v-1h-2v-3h2zM641 575h1v1h1v1h1v1h-1v1h-1v1h-1v-1h-2v-3h2zM649 565h1v1h1v1h1v1h-1v1h-1v1h-1v-1h-2v-3h2zM657 556h1v1h1v1h1v1h-1v1h-1v1h-1v-1h-2v-3h2zM665 548h1v1h1v1h1v1h-1v1h-1v1h-1v-1h-2v-3h2zM673 541h1v1h1v1h1v1h-1v1h-1v1h-1v-1h-2v-3h2zM681 534h1v1h1v1h1v1h-1v1h-1v1h-1v-1h-2v-3h2zM689 528h1v1h1v1h1v1h-1v1h-1v1h-1v-1h-2v-3h2zM697 522h1v1h1v1h1v1h-1v1h-1v1h-1v-1h-2v-3h2zM705 466h1v1h1v1h1v1h-1v1h-1v1h-1v-1h-2v-3h2zM713 467h1v1h1v1h1v1h-1v1h-1v1h-1v-1h-2v-3h2zM721 469h1v1h1v1h1v1h-1v1h-1v1h-1v-1h-2v-3h2zM729 470h1v1h1v1h1v1h-1v1h-1v1h-1v-1h-2v-3h2zM737 472h1v1h1v1h1v1h-1v1h-1v1h-1v-1h-2v-3h2zM745 474h1v1h1v1h1v1h-1v1h-1v1h-1v-1h-2v-3h2zM753 476h1v1h1v1h1v1h-1v1h-1v1h-1v-1h-2v-3h2zM761 480h1v1h1v1h1v1h-1v1h-1v1h-1v-1h-2v-3h2zM769 485h1v1h1v1h1v1h-1v1h-1v1h-1v-1h-2v-3h2zM777 494h1v1h1v1h1v1h-1v1h-1v1h-1v-1h-2v-3h2zM785 501h1v1h1v1h1v1h-1v1h-1v1h-1v-1h-2v-3h2zM793 508h1v1h1v1h1v1h-1v1h-1v1h-1v-1h-2v-3h2zM801 514h1v1h1v1h1v1h-1v1h-1v1h-1v-1h-2v-3h2zM809 520h1v1h1v1h1v1h-1v1h-1v1h-1v-1h-2v-3h2zM817 526h1v1h1v1h1v1h-1v1h-1v1h-1v-1h-2v-3h2zM825 531h1v1h1v1h1v1h-1v1h-1v1h-1v-1h-2v-3h2zM833 537h1v1h1v1h1v1h-1v1h-1v1h-1v-1h-2v-3h2zM841 541h1v1h1v1h1v1h-1v1h-1v1h-1v-1h-2v-3h2zM849 546h1v1h1v1h1v1h-1v1h-1v1h-1v-1h-2v-3h2zM857 550h1v1h1v1h1v1h-1v1h-1v1h-1v-1h-2v-3h2zM865 554h1v1h1v1h1v1h-1v1h-1v1h-1v-1h-2v-3h2zM873 558h1v1h1v1h1v1h-1v1h-1v1h-1v-1h-2v-3h2zM881 561h1v1h1v1h1v1h-1v1h-1v1h-1v-1h-2v-3h2zM889 565h1v1h1v1h1v1h-1v1h-1v1h-1v-1h-2v-3h2zM897 568h1v1h1v1h1v1h-1v1h-1v1h-1v-1h-2v-3h2zM905 617h1v1h1v1h1v1h-1v1h-1v1h-1v-1h-2v-3h2zM913 616h1v1h1v1h1v1h-1v1h-1v1h-1v-1h-2v-3h2zM921 615h1v1h1v1h1v1h-1v1h-1v1h-1v-1h-2v-3h2zM929 547h1v1h1v1h1v1h-1v1h-1v1h-1v-1h-2v-3h2zM937 548h1v1h1v1h1v1h-1v1h-1v1h-1v-1h-2v-3h2zM945 550h1v1h1v1h1v1h-1v1h-1v1h-1v-1h-2v-3h2zM953 553h1v1h1v1h1v1h-1v1h-1v1h-1v-1h-2v-3h2zM961 558h1v1h1v1h1v1h-1v1h-1v1h-1v-1h-2v-3h2zM969 563h1v1h1v1h1v1h-1v1h-1v1h-1v-1h-2v-3h2zM977 568h1v1h1v1h1v1h-1v1h-1v1h-1v-1h-2v-3h2z" fill="#008000"/>
</svg>
<div class="pl" style="top:111px">1.63605</div><div class="pl" style="top:144px">1.63390</div><div class="pl" style="top:177px">1.63170</div><div class="pl" style="top:210px">1.62950</div><div class="pl" style="top:243px">1.62735</div><div class="pl" style="top:276px">1.62515</div><div class="pl" style="top:309px">1.62295</div><div class="pl" style="top:342px">1.62080</div><div class="pl" style="top:375px">1.61860</div><div class="pl" style="top:408px">1.61640</div><div class="pl" style="top:441px">1.61425</div><div class="pl" style="top:474px">1.61205</div><div class="pl" style="top:507px">1.60985</div><div class="pl" style="top:540px">1.60770</div><div class="pl" style="top:573px">1.60550</div><div class="pl" style="top:606px">1.60330</div><div class="pl" style="top:639px">1.60110</div><div class="pl" style="top:672px">1.59895</div><div class="pl" style="top:705px">1.59675</div>
<div class="plbox" style="top:465px"><span class="sx">1.61260</span></div>
<div class="abs" style="left:1241px;top:622px;width:41px;height:3px;background:#000"></div>
<div class="plbox" style="top:625px"><span class="sx">1.60202</span></div>
<div class="tl" style="left:8px">2 Jan 2013</div><div class="tl" style="left:72px">3 Jan 02:00</div><div class="tl" style="left:136px">3 Jan 10:00</div><div class="tl" style="left:200px">3 Jan 18:00</div><div class="tl" style="left:264px">4 Jan 02:00</div><div class="tl" style="left:328px">4 Jan 10:00</div><div class="tl" style="left:392px">4 Jan 18:00</div><div class="tl" style="left:456px">7 Jan 02:00</div><div class="tl" style="left:520px">7 Jan 10:00</div><div class="tl" style="left:584px">7 Jan 18:00</div><div class="tl" style="left:648px">8 Jan 02:00</div><div class="tl" style="left:712px">8 Jan 10:00</div><div class="tl" style="left:776px">8 Jan 18:00</div><div class="tl" style="left:840px">9 Jan 02:00</div><div class="tl" style="left:904px">9 Jan 10:00</div><div class="tl" style="left:968px">9 Jan 18:00</div>
<div id="clabel">GBPUSD,H1&nbsp; 1.60265 1.60313 1.60196 1.60222</div>
<div id="tabline"></div>
<div id="tabbar"></div>
<div class="acttab"></div><div class="tab" style="left:20px">EURUSD,M15</div><div class="tab" style="left:106px">USDJPY,H1</div><div class="tab" style="left:182px">EURJPY,H1</div><div class="tab" style="left:258px">AUDUSD,H1</div><div class="tab act" style="left:339px">GBPUSD,H1</div><div class="tab" style="left:419px">GBPJPY,H1</div><div class="tab" style="left:494px">EURCHF,H1</div><div class="tab" style="left:575px">NZDUSD,M15</div><div class="tab" style="left:663px">AUDNZD,H1</div><div class="tab" style="left:742px">USDCHF,H1</div><div class="tsep" style="left:97px"></div><div class="tsep" style="left:172px"></div><div class="tsep" style="left:248px"></div><div class="tsep" style="left:484px"></div><div class="tsep" style="left:565px"></div><div class="tsep" style="left:653px"></div><div class="tsep" style="left:733px"></div><div class="tsep" style="left:812px"></div>
<svg width="40" height="20" viewBox="1250 734 40 20" style="position:absolute;left:1250px;top:734px"><path d="M1259 739.5v7l-3.5-3.5z" fill="#aca899"/><path d="M1274 739.5v7l3.5-3.5z" fill="#aca899"/></svg>
<div id="statusbar"></div>
<div class="st" style="left:6px">Для справки, нажмите F1</div><div class="st" style="left:567px">Default</div><div class="st" style="left:678px">2013.01.07 14:00</div><div class="st" style="left:778px">O: 1.60564</div><div class="st" style="left:851px">H: 1.60731</div><div class="st" style="left:921px">L: 1.60563</div><div class="st" style="left:991px">C: 1.60569</div><div class="st" style="left:1061px">V: 2878</div><div class="st" style="left:1176px">5114/3 kb</div><div class="ssep" style="left:563px"></div><div class="ssep" style="left:673px"></div><div class="ssep" style="left:773px"></div><div class="ssep" style="left:846px"></div><div class="ssep" style="left:916px"></div><div class="ssep" style="left:986px"></div><div class="ssep" style="left:1057px"></div><div class="ssep" style="left:1123px"></div>
<div id="taskbar"></div><div id="tray"></div><div id="startbtn"></div>
<svg width="1288" height="30" viewBox="0 752 1288 30" style="position:absolute;left:0;top:752px">
<rect x="1128" y="759" width="2" height="10" fill="#4e7a00"/><rect x="1128" y="769" width="2" height="2" fill="#8b1800"/><rect x="1131" y="759" width="2" height="9" fill="#4e7a00"/><rect x="1131" y="768" width="2" height="3" fill="#8b1800"/><rect x="1134" y="759" width="2" height="7" fill="#4e7a00"/><rect x="1134" y="766" width="2" height="5" fill="#8b1800"/><rect x="1137" y="759" width="2" height="6" fill="#4e7a00"/><rect x="1137" y="765" width="2" height="6" fill="#8b1800"/><rect x="1140" y="759" width="2" height="4" fill="#4e7a00"/><rect x="1140" y="763" width="2" height="8" fill="#8b1800"/><rect x="1143" y="759" width="2" height="3" fill="#4e7a00"/><rect x="1143" y="762" width="2" height="9" fill="#8b1800"/><rect x="1146" y="759" width="2" height="1" fill="#4e7a00"/><rect x="1146" y="760" width="2" height="11" fill="#8b1800"/><rect x="1149" y="759" width="2" height="0" fill="#4e7a00"/><rect x="1149" y="759" width="2" height="12" fill="#8b1800"/>
<path d="M1268 773L1283 758M1272 773L1283 762M1276 773L1283 766M1280 773L1283 770" stroke="#fff" stroke-width="1"/>
<path d="M1269 773L1283 759M1273 773L1283 763M1277 773L1283 767M1281 773L1283 771" stroke="#aca899" stroke-width="1"/>
</svg>
</body></html>
